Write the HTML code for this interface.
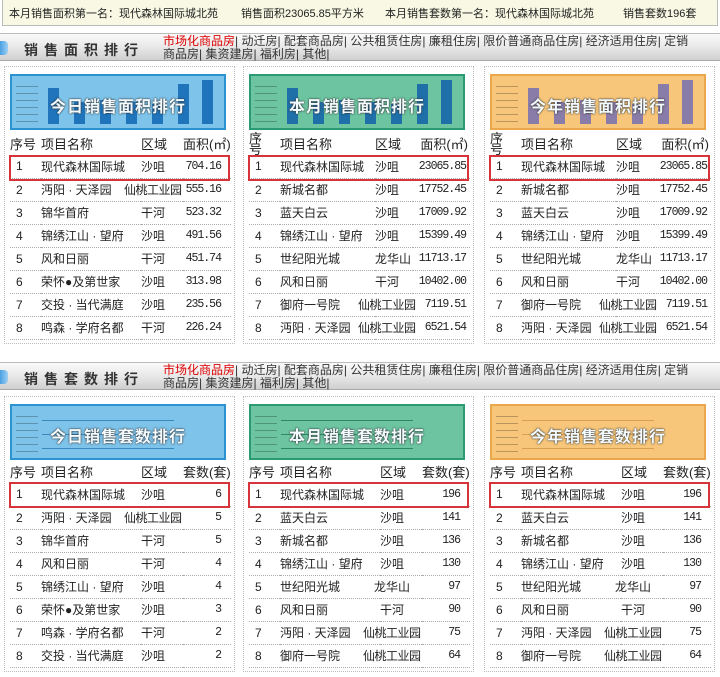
<!DOCTYPE html>
<html><head><meta charset="utf-8"><style>
*{margin:0;padding:0;box-sizing:border-box}
body{width:720px;height:677px;background:#fff;font-family:"Liberation Sans","Noto Sans CJK SC","WenQuanYi Zen Hei",sans-serif;font-size:12px;color:#222;position:relative;overflow:hidden}
.top{position:absolute;left:2px;top:0;width:716px;height:26px;background:#f8f8e4;border:1px solid #bbb;border-top:none}
.top span{position:absolute;top:5px;font-size:11px;color:#222;white-space:nowrap}
.hd{position:absolute;left:0;width:720px;height:28px;background:linear-gradient(#fafafa,#e8e8e8 50%,#cfcfcf);border-top:1px solid #bbb;border-bottom:1px solid #aaa}
.hd .ic{position:absolute;left:0;top:7px;width:8px;height:14px;background:linear-gradient(90deg,#4aa0e0,#9fd0f5);border-radius:0 4px 4px 0}
.hd .t{position:absolute;left:24px;top:6px;font-size:14px;font-weight:bold;letter-spacing:6px;color:#333}
.hd .l{position:absolute;left:163px;top:1px;width:540px;font-size:12px;line-height:13px;color:#333}
.hd .l b{font-weight:normal;color:#d00}
.panel{position:absolute;width:231px;border:1px dotted #bbb;background:#fff}
.bn{position:absolute;left:5px;top:7px;width:216px;height:56px;border:2px solid;overflow:hidden}
.bn .tx{position:absolute;left:0;right:0;top:17px;text-align:center;font-size:16px;font-weight:bold;letter-spacing:1px;color:#f4fbff;text-shadow:0 0 2px #333,0 0 1px #333}
.bn .br{position:absolute;bottom:4px;width:11px}
.bn .ln{position:absolute;left:30px;right:50px;height:1px}
.bn .ax{position:absolute;left:4px;top:4px;width:22px;height:44px;background:repeating-linear-gradient(transparent 0 6px,rgba(0,0,0,.25) 6px 7px)}
.blue{background:#7ec3ea;border-color:#2b93cf}.blue .br{background:#1f74bb}
.green{background:#6cc4a0;border-color:#2b9a72}.green .br{background:#1f6fa8}
.orange{background:#f7c67a;border-color:#eaa74c}.orange .br{background:#8a7ca8}
table{position:absolute;left:5px;width:221px;border-collapse:collapse;table-layout:fixed}
td{height:23px;white-space:nowrap;border-bottom:1px dotted #aaa;font-size:12px;overflow:visible}
tr.h td{border-bottom:none;font-size:13px}
td.s{padding-left:6px}
td.v{text-align:right;padding-right:10px;font-family:"Liberation Mono",monospace;font-size:11.5px;letter-spacing:-1px}
tr.h td.v{font-family:"Liberation Sans","Noto Sans CJK SC",sans-serif;font-size:13px;letter-spacing:0;padding-right:2px}
tr.h td.s{padding-left:0}
.p1 .s{width:31px}.p1 .n{width:100px}.p1 .a{width:42px}
.p2 .s{width:31px}.p2 .n{width:95px}.p2 .a{width:38px}.p2 td.v{padding-right:4px}
.q .s{width:31px}.q .n{width:100px}.q .a{width:42px}
.xg{margin-left:-17px;letter-spacing:-.5px}
.red{position:absolute;left:4px;width:221px;height:26px;border:2px solid #d8333b}
.st{line-height:11px;display:block}
</style></head><body>
<div class="top">
<span style="left:6px">本月销售面积第一名：现代森林国际城北苑</span>
<span style="left:238px">销售面积23065.85平方米</span>
<span style="left:382px">本月销售套数第一名：现代森林国际城北苑</span>
<span style="left:620px">销售套数196套</span>
</div>

<div class="hd" style="top:33px"><div class="ic"></div><div class="t">销售面积排行</div>
<div class="l"><b>市场化商品房</b>| 动迁房| 配套商品房| 公共租赁住房| 廉租住房| 限价普通商品住房| 经济适用住房| 定销<br>商品房| 集资建房| 福利房| 其他|</div></div>

<div class="panel" style="left:4px;top:66px;height:278px">
<div class="bn blue"><div class="ax"></div><div class="br" style="left:36px;height:36px"></div><div class="br" style="left:62px;height:22px"></div><div class="br" style="left:88px;height:24px"></div><div class="br" style="left:114px;height:22px"></div><div class="br" style="left:140px;height:20px"></div><div class="br" style="left:166px;height:40px"></div><div class="br" style="left:190px;height:44px"></div><div class="tx">今日销售面积排行</div></div>
<table class="p1" style="top:65px">
<tr class="h"><td class="s">序号</td><td class="n">项目名称</td><td class="a">区域</td><td class="v">面积(㎡)</td></tr>
<tr><td class="s">1</td><td class="n">现代森林国际城</td><td class="a">沙咀</td><td class="v">704.16</td></tr>
<tr><td class="s">2</td><td class="n">沔阳 · 天泽园</td><td class="a"><span class="xg">仙桃工业园</span></td><td class="v">555.16</td></tr>
<tr><td class="s">3</td><td class="n">锦华首府</td><td class="a">干河</td><td class="v">523.32</td></tr>
<tr><td class="s">4</td><td class="n">锦绣江山 · 望府</td><td class="a">沙咀</td><td class="v">491.56</td></tr>
<tr><td class="s">5</td><td class="n">风和日丽</td><td class="a">干河</td><td class="v">451.74</td></tr>
<tr><td class="s">6</td><td class="n">荣怀●及第世家</td><td class="a">沙咀</td><td class="v">313.98</td></tr>
<tr><td class="s">7</td><td class="n">交投 · 当代满庭</td><td class="a">沙咀</td><td class="v">235.56</td></tr>
<tr><td class="s">8</td><td class="n">鸣森 · 学府名都</td><td class="a">干河</td><td class="v">226.24</td></tr>
</table><div class="red" style="top:88px"></div></div>

<div class="panel" style="left:243px;top:66px;height:278px">
<div class="bn green"><div class="ax"></div><div class="br" style="left:36px;height:36px"></div><div class="br" style="left:62px;height:22px"></div><div class="br" style="left:88px;height:24px"></div><div class="br" style="left:114px;height:22px"></div><div class="br" style="left:140px;height:20px"></div><div class="br" style="left:166px;height:40px"></div><div class="br" style="left:190px;height:44px"></div><div class="tx">本月销售面积排行</div></div>
<table class="p2" style="top:65px">
<tr class="h"><td class="s"><span class="st">序<br>号</span></td><td class="n">项目名称</td><td class="a">区域</td><td class="v">面积(㎡)</td></tr>
<tr><td class="s">1</td><td class="n">现代森林国际城</td><td class="a">沙咀</td><td class="v">23065.85</td></tr>
<tr><td class="s">2</td><td class="n">新城名都</td><td class="a">沙咀</td><td class="v">17752.45</td></tr>
<tr><td class="s">3</td><td class="n">蓝天白云</td><td class="a">沙咀</td><td class="v">17009.92</td></tr>
<tr><td class="s">4</td><td class="n">锦绣江山 · 望府</td><td class="a">沙咀</td><td class="v">15399.49</td></tr>
<tr><td class="s">5</td><td class="n">世纪阳光城</td><td class="a">龙华山</td><td class="v">11713.17</td></tr>
<tr><td class="s">6</td><td class="n">风和日丽</td><td class="a">干河</td><td class="v">10402.00</td></tr>
<tr><td class="s">7</td><td class="n">御府一号院</td><td class="a"><span class="xg">仙桃工业园</span></td><td class="v">7119.51</td></tr>
<tr><td class="s">8</td><td class="n">沔阳 · 天泽园</td><td class="a"><span class="xg">仙桃工业园</span></td><td class="v">6521.54</td></tr>
</table><div class="red" style="top:88px"></div></div>

<div class="panel" style="left:484px;top:66px;height:278px">
<div class="bn orange"><div class="ax"></div><div class="br" style="left:36px;height:36px"></div><div class="br" style="left:62px;height:22px"></div><div class="br" style="left:88px;height:24px"></div><div class="br" style="left:114px;height:22px"></div><div class="br" style="left:140px;height:20px"></div><div class="br" style="left:166px;height:40px"></div><div class="br" style="left:190px;height:44px"></div><div class="tx">今年销售面积排行</div></div>
<table class="p2" style="top:65px">
<tr class="h"><td class="s"><span class="st">序<br>号</span></td><td class="n">项目名称</td><td class="a">区域</td><td class="v">面积(㎡)</td></tr>
<tr><td class="s">1</td><td class="n">现代森林国际城</td><td class="a">沙咀</td><td class="v">23065.85</td></tr>
<tr><td class="s">2</td><td class="n">新城名都</td><td class="a">沙咀</td><td class="v">17752.45</td></tr>
<tr><td class="s">3</td><td class="n">蓝天白云</td><td class="a">沙咀</td><td class="v">17009.92</td></tr>
<tr><td class="s">4</td><td class="n">锦绣江山 · 望府</td><td class="a">沙咀</td><td class="v">15399.49</td></tr>
<tr><td class="s">5</td><td class="n">世纪阳光城</td><td class="a">龙华山</td><td class="v">11713.17</td></tr>
<tr><td class="s">6</td><td class="n">风和日丽</td><td class="a">干河</td><td class="v">10402.00</td></tr>
<tr><td class="s">7</td><td class="n">御府一号院</td><td class="a"><span class="xg">仙桃工业园</span></td><td class="v">7119.51</td></tr>
<tr><td class="s">8</td><td class="n">沔阳 · 天泽园</td><td class="a"><span class="xg">仙桃工业园</span></td><td class="v">6521.54</td></tr>
</table><div class="red" style="top:88px"></div></div>

<div class="hd" style="top:362px"><div class="ic"></div><div class="t">销售套数排行</div>
<div class="l"><b>市场化商品房</b>| 动迁房| 配套商品房| 公共租赁住房| 廉租住房| 限价普通商品住房| 经济适用住房| 定销<br>商品房| 集资建房| 福利房| 其他|</div></div>

<div class="panel" style="left:4px;top:396px;height:276px">
<div class="bn blue"><div class="ax"></div><div class="ln" style="top:14px;background:#3a8ac0"></div><div class="ln" style="top:28px;background:#3a8ac0"></div><div class="ln" style="top:42px;background:#3a8ac0"></div><div class="tx">今日销售套数排行</div></div>
<table class="q" style="top:63px">
<tr class="h"><td class="s" style="height:22px">序号</td><td class="n">项目名称</td><td class="a">区域</td><td class="v">套数(套)</td></tr>
<tr><td class="s">1</td><td class="n">现代森林国际城</td><td class="a">沙咀</td><td class="v">6</td></tr>
<tr><td class="s">2</td><td class="n">沔阳 · 天泽园</td><td class="a"><span class="xg">仙桃工业园</span></td><td class="v">5</td></tr>
<tr><td class="s">3</td><td class="n">锦华首府</td><td class="a">干河</td><td class="v">5</td></tr>
<tr><td class="s">4</td><td class="n">风和日丽</td><td class="a">干河</td><td class="v">4</td></tr>
<tr><td class="s">5</td><td class="n">锦绣江山 · 望府</td><td class="a">沙咀</td><td class="v">4</td></tr>
<tr><td class="s">6</td><td class="n">荣怀●及第世家</td><td class="a">沙咀</td><td class="v">3</td></tr>
<tr><td class="s">7</td><td class="n">鸣森 · 学府名都</td><td class="a">干河</td><td class="v">2</td></tr>
<tr><td class="s">8</td><td class="n">交投 · 当代满庭</td><td class="a">沙咀</td><td class="v">2</td></tr>
</table><div class="red" style="top:85px"></div></div>

<div class="panel" style="left:243px;top:396px;height:276px">
<div class="bn green"><div class="ax"></div><div class="ln" style="top:14px;background:#2a8a66"></div><div class="ln" style="top:28px;background:#2a8a66"></div><div class="ln" style="top:42px;background:#2a8a66"></div><div class="tx">本月销售套数排行</div></div>
<table class="q" style="top:63px">
<tr class="h"><td class="s" style="height:22px">序号</td><td class="n">项目名称</td><td class="a">区域</td><td class="v">套数(套)</td></tr>
<tr><td class="s">1</td><td class="n">现代森林国际城</td><td class="a">沙咀</td><td class="v">196</td></tr>
<tr><td class="s">2</td><td class="n">蓝天白云</td><td class="a">沙咀</td><td class="v">141</td></tr>
<tr><td class="s">3</td><td class="n">新城名都</td><td class="a">沙咀</td><td class="v">136</td></tr>
<tr><td class="s">4</td><td class="n">锦绣江山 · 望府</td><td class="a">沙咀</td><td class="v">130</td></tr>
<tr><td class="s">5</td><td class="n">世纪阳光城</td><td class="a"><span style="margin-left:-6px">龙华山</span></td><td class="v">97</td></tr>
<tr><td class="s">6</td><td class="n">风和日丽</td><td class="a">干河</td><td class="v">90</td></tr>
<tr><td class="s">7</td><td class="n">沔阳 · 天泽园</td><td class="a"><span class="xg">仙桃工业园</span></td><td class="v">75</td></tr>
<tr><td class="s">8</td><td class="n">御府一号院</td><td class="a"><span class="xg">仙桃工业园</span></td><td class="v">64</td></tr>
</table><div class="red" style="top:85px"></div></div>

<div class="panel" style="left:484px;top:396px;height:276px">
<div class="bn orange"><div class="ax"></div><div class="ln" style="top:14px;background:#d8a050"></div><div class="ln" style="top:28px;background:#d8a050"></div><div class="ln" style="top:42px;background:#d8a050"></div><div class="tx">今年销售套数排行</div></div>
<table class="q" style="top:63px">
<tr class="h"><td class="s" style="height:22px">序号</td><td class="n">项目名称</td><td class="a">区域</td><td class="v">套数(套)</td></tr>
<tr><td class="s">1</td><td class="n">现代森林国际城</td><td class="a">沙咀</td><td class="v">196</td></tr>
<tr><td class="s">2</td><td class="n">蓝天白云</td><td class="a">沙咀</td><td class="v">141</td></tr>
<tr><td class="s">3</td><td class="n">新城名都</td><td class="a">沙咀</td><td class="v">136</td></tr>
<tr><td class="s">4</td><td class="n">锦绣江山 · 望府</td><td class="a">沙咀</td><td class="v">130</td></tr>
<tr><td class="s">5</td><td class="n">世纪阳光城</td><td class="a"><span style="margin-left:-6px">龙华山</span></td><td class="v">97</td></tr>
<tr><td class="s">6</td><td class="n">风和日丽</td><td class="a">干河</td><td class="v">90</td></tr>
<tr><td class="s">7</td><td class="n">沔阳 · 天泽园</td><td class="a"><span class="xg">仙桃工业园</span></td><td class="v">75</td></tr>
<tr><td class="s">8</td><td class="n">御府一号院</td><td class="a"><span class="xg">仙桃工业园</span></td><td class="v">64</td></tr>
</table><div class="red" style="top:85px"></div></div>
</body></html>
